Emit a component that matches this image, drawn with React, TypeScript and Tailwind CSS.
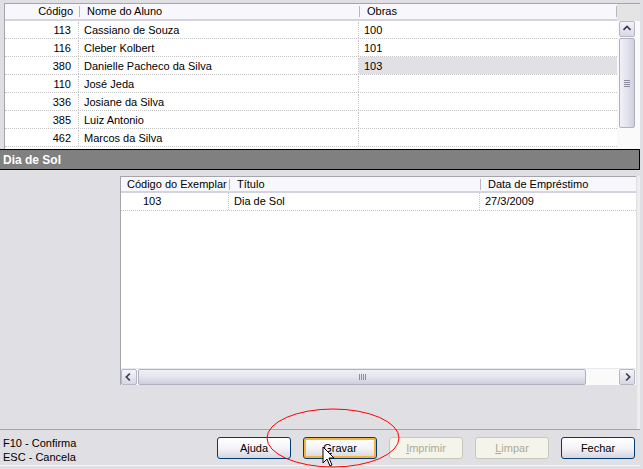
import React from "react";

const ALUNOS = [
  { cod: "113", nome: "Cassiano de Souza", obras: "100" },
  { cod: "116", nome: "Cleber Kolbert", obras: "101" },
  { cod: "380", nome: "Danielle Pacheco da Silva", obras: "103", sel: true },
  { cod: "110", nome: "José Jeda", obras: "" },
  { cod: "336", nome: "Josiane da Silva", obras: "" },
  { cod: "385", nome: "Luiz Antonio", obras: "" },
  { cod: "462", nome: "Marcos da Silva", obras: "" },
];

function HeaderCell({
  children,
  className = "",
}: {
  children?: React.ReactNode;
  className?: string;
}) {
  return (
    <div className={`flex h-full items-center ${className}`}>
      {children}
    </div>
  );
}

function Divider() {
  return <div className="h-[11px] w-px bg-[#b8b8c4]" />;
}

function XpButton({
  label,
  under,
  disabled,
  focused,
}: {
  label: string;
  under?: boolean;
  disabled?: boolean;
  focused?: boolean;
}) {
  if (disabled) {
    return (
      <div className="flex h-[22px] w-[74px] items-center justify-center rounded-[3px] border border-[#c9c7ba] bg-[#f5f4ea] text-[#aca899]">
        <span>
          <span className="underline">{label[0]}</span>
          {label.slice(1)}
        </span>
      </div>
    );
  }
  return (
    <div
      className={`flex h-[22px] w-[74px] items-center justify-center rounded-[3px] border border-[#003c74] bg-gradient-to-b from-white via-[#f4f4f8] to-[#d6d5e0] text-black ${
        focused ? "shadow-[inset_0_0_0_2px_#f8b33a]" : ""
      }`}
    >
      {under ? (
        <span>
          <span className="underline">{label[0]}</span>
          {label.slice(1)}
        </span>
      ) : (
        label
      )}
    </div>
  );
}

function ArrowBtn({ dir }: { dir: "up" | "left" | "right" }) {
  const d =
    dir === "up"
      ? "M4 9 L8 5 L12 9"
      : dir === "left"
      ? "M9 4 L5 8 L9 12"
      : "M7 4 L11 8 L7 12";
  return (
    <div className="flex h-4 w-4 items-center justify-center rounded-[2px] border border-[#b6b6c4] bg-gradient-to-b from-[#f4f4fa] to-[#d8d8e4]">
      <svg width="16" height="16" viewBox="0 0 16 16">
        <path d={d} fill="none" stroke="#3c3c4c" strokeWidth="2" />
      </svg>
    </div>
  );
}

export default function App() {
  return (
    <div
      className="relative h-[469px] w-[643px] overflow-hidden bg-[#e0dfe3] text-[11px] text-black"
      style={{ fontFamily: '"Liberation Sans", Arial, sans-serif' }}
    >
      {/* top grid */}
      <div className="pl-[4px] pt-[3px]">
        <div className="flex h-[146px] w-[636px] border-l border-t border-[#a4a4ac] bg-white">
          <div className="flex w-[612px] flex-col">
            <div className="flex h-[17px] border-b-2 border-[#d4d4e0] bg-[#f8f8fc]">
              <HeaderCell className="w-[74px] justify-end pr-[6px]">
                Código
              </HeaderCell>
              <HeaderCell className="w-[280px]">
                <Divider />
                <span className="pl-[7px]">Nome do Aluno</span>
              </HeaderCell>
              <HeaderCell className="flex-1">
                <Divider />
                <span className="pl-[7px]">Obras</span>
              </HeaderCell>
              <HeaderCell className="w-px">
                <Divider />
              </HeaderCell>
            </div>
            {ALUNOS.map((a) => (
              <div
                key={a.cod}
                className="flex h-[18px] border-b border-dotted border-[#c4c4c4] pt-px"
              >
                <div className="flex w-[74px] items-center justify-end border-r border-dotted border-[#c4c4c4] pr-[7px]">
                  {a.cod}
                </div>
                <div className="flex w-[280px] items-center border-r border-dotted border-[#c4c4c4] pl-[5px]">
                  {a.nome}
                </div>
                <div
                  className={`-mt-px flex flex-1 items-center pl-[5px] pt-px ${
                    a.sel ? "bg-[#e0e0e6]" : ""
                  }`}
                >
                  {a.obras}
                </div>
              </div>
            ))}
          </div>
          <div className="flex flex-1 flex-col">
            <div className="h-[17px] bg-[#e4e4e4]" />
            <div className="flex flex-1 bg-[#fafafa] pl-[2px]">
              <div className="flex w-4 flex-col">
                <ArrowBtn dir="up" />
                <div className="mt-px flex h-[90px] items-center justify-center rounded-[2px] border border-[#b0b0c0] bg-gradient-to-r from-[#f0f0f8] via-[#e4e4ee] to-[#cfcfdc]">
                  <div className="flex flex-col gap-px">
                    <div className="h-px w-[6px] bg-[#8c8c9c]" />
                    <div className="h-px w-[6px] bg-[#8c8c9c]" />
                    <div className="h-px w-[6px] bg-[#8c8c9c]" />
                    <div className="h-px w-[6px] bg-[#8c8c9c]" />
                  </div>
                </div>
              </div>
            </div>
          </div>
        </div>
      </div>

      {/* title bar */}
      <div className="flex h-[21px] w-[640px] items-center border-y border-r border-black bg-[#808080] pl-[3px] pt-px text-[12px] font-bold text-white">
        Dia de Sol
      </div>

      {/* lower section */}
      <div className="flex h-[259px] pt-[6px]">
        <div className="w-[120px]" />
        <div className="flex h-[209px] w-[516px] flex-col border-l border-t border-[#a4a4ac] bg-white">
          <div className="flex h-[16px] border-b-2 border-[#d4d4e0] bg-[#f8f8fc]">
            <HeaderCell className="w-[108px] pl-[6px]">
              Código do Exemplar
            </HeaderCell>
            <HeaderCell className="w-[251px]">
              <Divider />
              <span className="pl-[7px]">Título</span>
            </HeaderCell>
            <HeaderCell className="flex-1">
              <Divider />
              <span className="pl-[7px]">Data de Empréstimo</span>
            </HeaderCell>
          </div>
          <div className="flex h-[18px] border-b border-dotted border-[#c4c4c4]">
            <div className="flex w-[108px] items-center border-r border-dotted border-[#c4c4c4] pl-[22px]">
              103
            </div>
            <div className="flex w-[251px] items-center border-r border-dotted border-[#c4c4c4] pl-[5px]">
              Dia de Sol
            </div>
            <div className="flex flex-1 items-center pl-[5px]">27/3/2009</div>
          </div>
          <div className="flex-1" />
          <div className="flex h-[17px] items-center border-t border-[#e8e8ee] bg-[#fafafa]">
            <ArrowBtn dir="left" />
            <div className="ml-px flex h-[16px] w-[448px] items-center justify-center rounded-[2px] border border-[#b0b0c0] bg-gradient-to-b from-[#f0f0f8] via-[#e4e4ee] to-[#cfcfdc]">
              <div className="flex gap-px">
                <div className="h-[6px] w-px bg-[#8c8c9c]" />
                <div className="h-[6px] w-px bg-[#8c8c9c]" />
                <div className="h-[6px] w-px bg-[#8c8c9c]" />
                <div className="h-[6px] w-px bg-[#8c8c9c]" />
              </div>
            </div>
            <div className="flex-1" />
            <ArrowBtn dir="right" />
            <div className="w-px" />
          </div>
        </div>
        <div className="ml-px h-full w-[3px] bg-[#eeeeef]" />
      </div>

      {/* footer */}
      <div className="flex h-[37px] w-[640px] items-center border-y border-t-[#a4a4ac] border-b-[#f4f4f4] pl-[3px] pr-[5px]">
        <div className="mt-[4px] flex flex-col leading-[14px]">
          <span>F10 - Confirma</span>
          <span>ESC - Cancela</span>
        </div>
        <div className="ml-auto mt-px flex gap-[12px]">
          <XpButton label="Ajuda" />
          <XpButton label="Gravar" under focused />
          <XpButton label="Imprimir" disabled />
          <XpButton label="Limpar" disabled />
          <XpButton label="Fechar" />
        </div>
      </div>

      {/* red annotation ellipse */}
      <svg
        className="pointer-events-none absolute left-[262px] top-[404px]"
        width="145"
        height="68"
        viewBox="0 0 145 68"
      >
        <ellipse
          cx="71"
          cy="34"
          rx="66"
          ry="29"
          fill="none"
          stroke="#ff0000"
          strokeWidth="1"
        />
      </svg>

      {/* mouse cursor */}
      <svg
        className="pointer-events-none absolute left-[322px] top-[446px]"
        width="13"
        height="22"
        viewBox="0 0 13 22"
      >
        <path
          d="M1 1 L1 17 L5 13 L8 20 L10 19 L7 12 L12 12 Z"
          fill="#ffffff"
          stroke="#000000"
          strokeWidth="1"
          strokeLinejoin="miter"
        />
      </svg>
    </div>
  );
}
